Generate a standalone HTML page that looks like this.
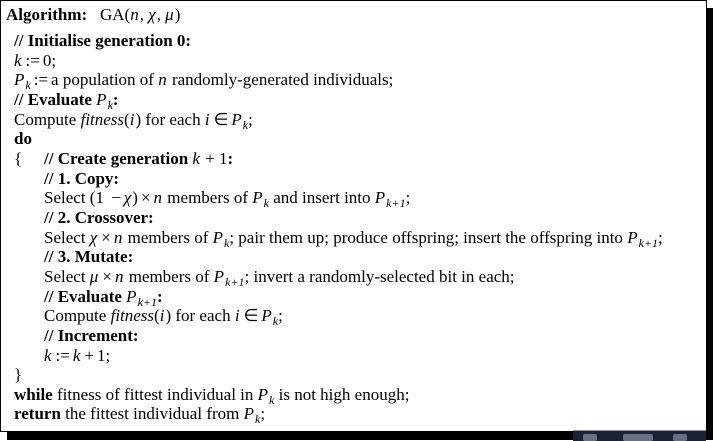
<!DOCTYPE html>
<html><head><meta charset="utf-8"><style>
body{margin:0;width:713px;height:440px;background:#fff;position:relative;overflow:hidden;font-family:"Liberation Serif",serif;color:#000}
.box{position:absolute;left:0;top:0;width:705px;height:430px;border:1px solid #000;background:#fff}
.sh1{position:absolute;left:707px;top:8px;width:6px;height:432px;background:#000}
.sh2{position:absolute;left:7px;top:432px;width:706px;height:8px;background:#000}
.tb{position:absolute;left:573px;top:430px;width:133px;height:10px;background:#1b2236;border-top:1px solid #8a8f9a}
.tb i{position:absolute;top:3px;height:7px;background:#6b7080;border-radius:2px}
.title{position:absolute;left:6px;top:4px;font-size:17px;line-height:22px}
.body{position:absolute;left:14px;top:31px;font-size:17px;line-height:19.65px;white-space:nowrap}
.ind{padding-left:30px}
.m{font-style:italic;font-weight:normal;margin-right:1px}
sub{font-size:12px;font-style:italic;font-weight:normal;vertical-align:-4px;line-height:0}
b{font-weight:bold}
.br{position:absolute;left:0}
.op{margin:0 3px}
</style></head><body>
<div class="sh1"></div><div class="sh2"></div>
<div class="box"></div>
<div class="tb"><i style="left:10px;width:14px"></i><i style="left:50px;width:30px"></i><i style="left:100px;width:14px"></i></div>
<div class="title"><b>Algorithm:</b>&nbsp;&nbsp; GA(<span class="m">n</span>, <span class="m">χ</span>, <span class="m">μ</span>)</div>
<div class="body">
<div><b>// Initialise generation 0:</b></div>
<div><span class="m">k</span><span class="op">:=</span>0;</div>
<div><span class="m">P</span><sub>k</sub><span class="op">:=</span>a population of <span class="m">n</span> randomly-generated individuals;</div>
<div><b>// Evaluate <span class="m">P</span><sub>k</sub>:</b></div>
<div>Compute <i>fitness</i>(<span class="m">i</span>) for each <span class="m">i</span><span class="op">∈</span><span class="m">P</span><sub>k</sub>;</div>
<div><b>do</b></div>
<div style="position:relative"><span class="br">{</span><div class="ind"><b>// Create generation <span class="m">k</span> <span style="font-weight:normal">+ 1</span>:</b></div></div>
<div class="ind"><b>// 1. Copy:</b></div>
<div class="ind">Select (1 <span class="op">−</span><span class="m">χ</span>)<span class="op">×</span><span class="m">n</span> members of <span class="m">P</span><sub>k</sub> and insert into <span class="m">P</span><sub>k+1</sub>;</div>
<div class="ind"><b>// 2. Crossover:</b></div>
<div class="ind">Select <span class="m">χ</span><span class="op">×</span><span class="m">n</span> members of <span class="m">P</span><sub>k</sub>; pair them up; produce offspring; insert the offspring into <span class="m">P</span><sub>k+1</sub>;</div>
<div class="ind"><b>// 3. Mutate:</b></div>
<div class="ind">Select <span class="m">μ</span><span class="op">×</span><span class="m">n</span> members of <span class="m">P</span><sub>k+1</sub>; invert a randomly-selected bit in each;</div>
<div class="ind"><b>// Evaluate <span class="m">P</span><sub>k+1</sub>:</b></div>
<div class="ind">Compute <i>fitness</i>(<span class="m">i</span>) for each <span class="m">i</span><span class="op">∈</span><span class="m">P</span><sub>k</sub>;</div>
<div class="ind"><b>// Increment:</b></div>
<div class="ind"><span class="m">k</span><span class="op">:=</span><span class="m">k</span><span class="op">+</span>1;</div>
<div>}</div>
<div><b>while</b> fitness of fittest individual in <span class="m">P</span><sub>k</sub> is not high enough;</div>
<div><b>return</b> the fittest individual from <span class="m">P</span><sub>k</sub>;</div>
</div>
</body></html>
